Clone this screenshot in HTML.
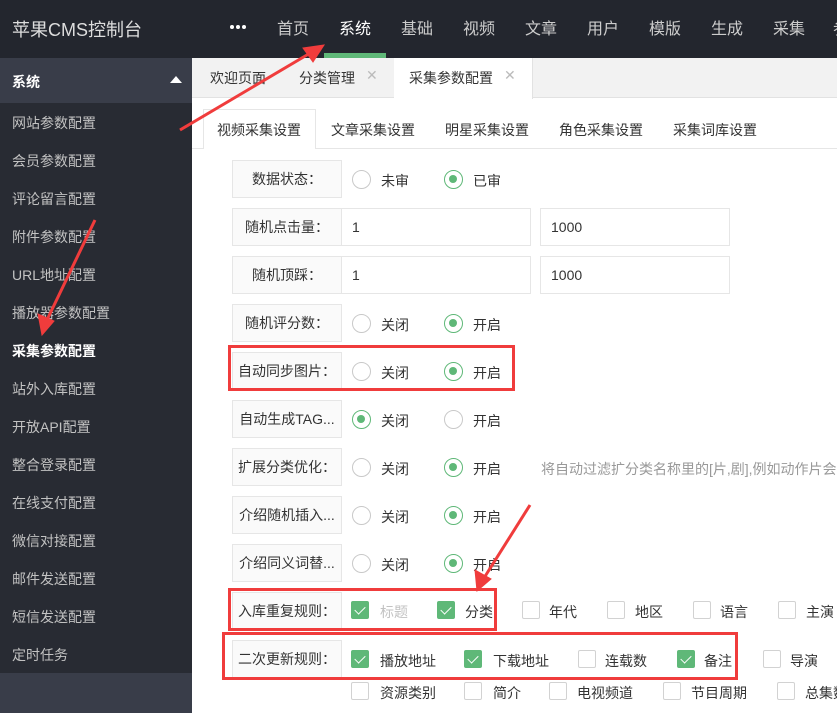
<!DOCTYPE html>
<html><head><meta charset="utf-8"><style>
*{margin:0;padding:0;box-sizing:border-box}
body{width:837px;height:713px;overflow:hidden;position:relative;background:#fff;font-family:"Liberation Sans","Noto Sans CJK SC",sans-serif;font-size:14px;color:#333}
.a{position:absolute;white-space:nowrap}
#hd{left:0;top:0;width:837px;height:58px;background:#23262e}
.nav{top:15px;font-size:16px;color:#ccc}
#sb{left:0;top:58px;width:192px;height:655px;background:#282b33}
.si{left:12px;color:#c2c2c2;font-size:14px}
.lb{left:232px;width:110px;height:38px;background:#fafafa;border:1px solid #e6e6e6;text-align:center;line-height:36px;font-size:14px;color:#333}
.in{height:38px;border:1px solid #e6e6e6;padding-left:10px;line-height:36px;font-size:14px}
.r{width:19px;height:19px;border:1.5px solid #c9c9c9;border-radius:50%}
.r.on{border-color:#5fb878}
.r.on:after{content:"";position:absolute;left:4px;top:4px;width:8px;height:8px;border-radius:50%;background:#5fb878}
.t{font-size:14px;color:#333}
.c{width:18px;height:18px;border:1px solid #d2d2d2;border-radius:2px;background:#fff}
.c.on{background:#5fb878;border-color:#5fb878}
.c.on:after{content:"";position:absolute;left:5px;top:2px;width:5px;height:9px;border:solid #fff;border-width:0 1.5px 1.5px 0;transform:rotate(45deg)}
.red{border:3px solid #f03c3c}
</style></head><body>
<div class="a" id="hd"></div>
<div class="a" style="left:12px;top:16px;font-size:18px;color:#ddd">苹果CMS控制台</div>
<div class="a" style="left:230px;top:25px;width:4px;height:4px;border-radius:2px;background:#fff"></div>
<div class="a" style="left:236px;top:25px;width:4px;height:4px;border-radius:2px;background:#fff"></div>
<div class="a" style="left:242px;top:25px;width:4px;height:4px;border-radius:2px;background:#fff"></div>
<div class="a nav" style="left:277px">首页</div>
<div class="a nav" style="left:339px;color:#fff">系统</div>
<div class="a" style="left:324px;top:53px;width:62px;height:5px;background:#5fb878"></div>
<div class="a nav" style="left:401px">基础</div>
<div class="a nav" style="left:463px">视频</div>
<div class="a nav" style="left:525px">文章</div>
<div class="a nav" style="left:587px">用户</div>
<div class="a nav" style="left:649px">模版</div>
<div class="a nav" style="left:711px">生成</div>
<div class="a nav" style="left:773px">采集</div>
<div class="a nav" style="left:833px">参</div>

<div class="a" id="sb"></div>
<div class="a" style="left:0;top:58px;width:192px;height:45px;background:#393d49"></div>
<div class="a" style="left:12px;top:72px;color:#fff;font-weight:bold">系统</div>
<div class="a" style="left:170px;top:76px;width:0;height:0;border-left:6px solid transparent;border-right:6px solid transparent;border-bottom:7px solid #fff"></div>
<div class="a" style="left:0;top:673px;width:192px;height:40px;background:#393d49"></div>
<div class="a si" style="top:113px">网站参数配置</div>
<div class="a si" style="top:151px">会员参数配置</div>
<div class="a si" style="top:189px">评论留言配置</div>
<div class="a si" style="top:227px">附件参数配置</div>
<div class="a si" style="top:265px">URL地址配置</div>
<div class="a si" style="top:303px">播放器参数配置</div>
<div class="a si" style="top:341px;color:#fff;font-weight:bold">采集参数配置</div>
<div class="a si" style="top:379px">站外入库配置</div>
<div class="a si" style="top:417px">开放API配置</div>
<div class="a si" style="top:455px">整合登录配置</div>
<div class="a si" style="top:493px">在线支付配置</div>
<div class="a si" style="top:531px">微信对接配置</div>
<div class="a si" style="top:569px">邮件发送配置</div>
<div class="a si" style="top:607px">短信发送配置</div>
<div class="a si" style="top:645px">定时任务</div>

<div class="a" style="left:192px;top:58px;width:645px;height:40px;background:#f2f2f2;border-bottom:1px solid #e2e2e2"></div>
<div class="a" style="left:210px;top:68px">欢迎页面</div>
<div class="a" style="left:299px;top:68px">分类管理</div>
<div class="a" style="left:366px;top:67px;color:#bbb">✕</div>
<div class="a" style="left:394px;top:58px;width:139px;height:41px;background:#fff;border-right:1px solid #e2e2e2"></div>
<div class="a" style="left:409px;top:68px">采集参数配置</div>
<div class="a" style="left:504px;top:67px;color:#bbb">✕</div>

<div class="a" style="left:192px;top:148px;width:645px;height:1px;background:#e6e6e6"></div>
<div class="a" style="left:203px;top:109px;width:113px;height:40px;background:#fff;border:1px solid #e6e6e6;border-bottom:none"></div>
<div class="a" style="left:217px;top:120px">视频采集设置</div>
<div class="a" style="left:331px;top:120px">文章采集设置</div>
<div class="a" style="left:445px;top:120px">明星采集设置</div>
<div class="a" style="left:559px;top:120px">角色采集设置</div>
<div class="a" style="left:673px;top:120px">采集词库设置</div>

<div class="a lb" style="top:160px">数据状态：</div>
<div class="a r" style="left:352px;top:170px"></div><div class="a t" style="left:381px;top:171px">未审</div>
<div class="a r on" style="left:444px;top:170px"></div><div class="a t" style="left:473px;top:171px">已审</div>

<div class="a lb" style="top:208px">随机点击量：</div>
<div class="a in" style="left:341px;top:208px;width:190px">1</div>
<div class="a in" style="left:540px;top:208px;width:190px">1000</div>

<div class="a lb" style="top:256px">随机顶踩：</div>
<div class="a in" style="left:341px;top:256px;width:190px">1</div>
<div class="a in" style="left:540px;top:256px;width:190px">1000</div>

<div class="a lb" style="top:304px">随机评分数：</div>
<div class="a r" style="left:352px;top:314px"></div><div class="a t" style="left:381px;top:315px">关闭</div>
<div class="a r on" style="left:444px;top:314px"></div><div class="a t" style="left:473px;top:315px">开启</div>

<div class="a lb" style="top:352px">自动同步图片：</div>
<div class="a r" style="left:352px;top:362px"></div><div class="a t" style="left:381px;top:363px">关闭</div>
<div class="a r on" style="left:444px;top:362px"></div><div class="a t" style="left:473px;top:363px">开启</div>

<div class="a lb" style="top:400px">自动生成TAG...</div>
<div class="a r on" style="left:352px;top:410px"></div><div class="a t" style="left:381px;top:411px">关闭</div>
<div class="a r" style="left:444px;top:410px"></div><div class="a t" style="left:473px;top:411px">开启</div>

<div class="a lb" style="top:448px">扩展分类优化：</div>
<div class="a r" style="left:352px;top:458px"></div><div class="a t" style="left:381px;top:459px">关闭</div>
<div class="a r on" style="left:444px;top:458px"></div><div class="a t" style="left:473px;top:459px">开启</div>
<div class="a" style="left:541px;top:459px;color:#999;font-size:14px">将自动过滤扩分类名称里的[片,剧],例如动作片会</div>

<div class="a lb" style="top:496px">介绍随机插入...</div>
<div class="a r" style="left:352px;top:506px"></div><div class="a t" style="left:381px;top:507px">关闭</div>
<div class="a r on" style="left:444px;top:506px"></div><div class="a t" style="left:473px;top:507px">开启</div>

<div class="a lb" style="top:544px">介绍同义词替...</div>
<div class="a r" style="left:352px;top:554px"></div><div class="a t" style="left:381px;top:555px">关闭</div>
<div class="a r on" style="left:444px;top:554px"></div><div class="a t" style="left:473px;top:555px">开启</div>

<div class="a lb" style="top:592px">入库重复规则：</div>
<div class="a c on" style="left:351px;top:601px"></div><div class="a t" style="left:380px;top:602px;color:#c2c2c2">标题</div>
<div class="a c on" style="left:437px;top:601px"></div><div class="a t" style="left:465px;top:602px">分类</div>
<div class="a c" style="left:522px;top:601px"></div><div class="a t" style="left:549px;top:602px">年代</div>
<div class="a c" style="left:607px;top:601px"></div><div class="a t" style="left:635px;top:602px">地区</div>
<div class="a c" style="left:693px;top:601px"></div><div class="a t" style="left:720px;top:602px">语言</div>
<div class="a c" style="left:778px;top:601px"></div><div class="a t" style="left:806px;top:602px">主演</div>

<div class="a lb" style="top:640px">二次更新规则：</div>
<div class="a c on" style="left:351px;top:650px"></div><div class="a t" style="left:380px;top:651px">播放地址</div>
<div class="a c on" style="left:464px;top:650px"></div><div class="a t" style="left:493px;top:651px">下载地址</div>
<div class="a c" style="left:578px;top:650px"></div><div class="a t" style="left:605px;top:651px">连载数</div>
<div class="a c on" style="left:677px;top:650px"></div><div class="a t" style="left:704px;top:651px">备注</div>
<div class="a c" style="left:763px;top:650px"></div><div class="a t" style="left:790px;top:651px">导演</div>

<div class="a c" style="left:351px;top:682px"></div><div class="a t" style="left:380px;top:683px">资源类别</div>
<div class="a c" style="left:464px;top:682px"></div><div class="a t" style="left:493px;top:683px">简介</div>
<div class="a c" style="left:549px;top:682px"></div><div class="a t" style="left:577px;top:683px">电视频道</div>
<div class="a c" style="left:663px;top:682px"></div><div class="a t" style="left:691px;top:683px">节目周期</div>
<div class="a c" style="left:777px;top:682px"></div><div class="a t" style="left:805px;top:683px">总集数</div>

<div class="a red" style="left:228px;top:345px;width:287px;height:46px"></div>
<div class="a red" style="left:228px;top:588px;width:269px;height:43px"></div>
<div class="a red" style="left:222px;top:632px;width:516px;height:48px"></div>

<svg class="a" style="left:0;top:0" width="837" height="713">
<g stroke="#f03c3c" stroke-width="3" fill="#f03c3c">
<line x1="180" y1="130" x2="312" y2="52"/>
<polygon points="324,45 303,48 313,62" stroke-width="1"/>
<line x1="95" y1="220" x2="46" y2="322"/>
<polygon points="42,335 38,314 54,321" stroke-width="1"/>
<line x1="530" y1="505" x2="484" y2="578"/>
<polygon points="477,591 475,570 491,579" stroke-width="1"/>
</g></svg>
</body></html>
